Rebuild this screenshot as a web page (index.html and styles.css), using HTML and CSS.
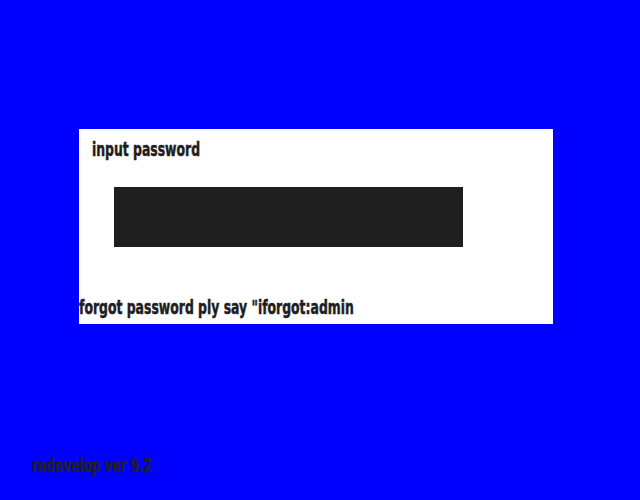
FILE: index.html
```html
<!DOCTYPE html>
<html>
<head>
<meta charset="utf-8">
<link rel="stylesheet" href="styles.css">
</head>
<body>
<div class="screen">
  <div class="panel">
    <div class="label">input password</div>
    <div class="field"></div>
    <div class="hint">forgot password ply say "iforgot:admin</div>
  </div>
  <div class="footer">redevelop ver 9.2</div>
</div>
</body>
</html>
```
FILE: styles.css
```css
html, body {
  margin: 0;
  padding: 0;
  background: #0000ff;
}
.screen {
  width: 640px;
  height: 500px;
  padding-top: 129px;
  box-sizing: border-box;
  font-family: "DejaVu Sans Condensed", "DejaVu Sans", sans-serif;
  font-weight: bold;
  color: #1e1e1e;
  overflow: hidden;
}
.panel {
  margin-left: 79px;
  width: 474px;
  height: 195px;
  background: #ffffff;
  display: flex;
  flex-direction: column;
  align-items: flex-start;
}
.label,
.hint,
.footer {
  font-size: 20px;
  line-height: 20px;
  white-space: nowrap;
  transform: scaleX(0.69);
  transform-origin: left center;
  -webkit-text-stroke: 0.5px currentColor;
}
.label {
  margin-top: 10px;
  margin-left: 13px;
}
.field {
  margin-top: 28px;
  margin-left: 35px;
  width: 349px;
  height: 60px;
  background: #1e1e1e;
}
.hint {
  margin-top: 50px;
}
.footer {
  margin-top: 131px;
  margin-left: 32px;
  letter-spacing: -0.3px;
  color: #202020;
}
```
